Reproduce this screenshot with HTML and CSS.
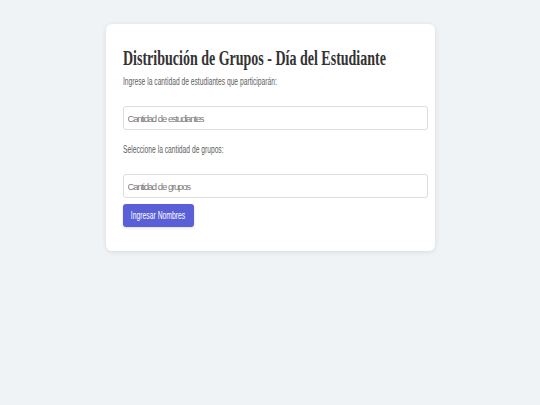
FILE: index.html
```html
<!DOCTYPE html>
<html lang="es">
<head>
<meta charset="utf-8">
<title>Distribución de Grupos</title>
<link rel="stylesheet" href="styles.css">
</head>
<body>
<main class="page">
  <section class="card">
    <h1 class="title"><span class="squeeze">Distribución de Grupos - Día del Estudiante</span></h1>
    <label class="label" for="estudiantes"><span class="squeeze">Ingrese la cantidad de estudiantes que participarán:</span></label>
    <input class="field" id="estudiantes" type="number" placeholder="Cantidad de estudiantes">
    <label class="label label-second" for="grupos"><span class="squeeze">Seleccione la cantidad de grupos:</span></label>
    <input class="field" id="grupos" type="number" placeholder="Cantidad de grupos">
    <button class="btn" type="button"><span class="squeeze squeeze-center">Ingresar Nombres</span></button>
  </section>
</main>
</body>
</html>
```

FILE: styles.css
```css
html, body {
  margin: 0;
  padding: 0;
}

body {
  background: #f0f3f6;
  font-family: "Liberation Sans", Arial, sans-serif;
  width: 540px;
  height: 405px;
}

.page {
  display: flex;
  justify-content: center;
  padding-top: 24px;
}

.card {
  width: 329px;
  box-sizing: border-box;
  background: #ffffff;
  border-radius: 6px;
  box-shadow: 0 1px 5px rgba(0, 0, 0, 0.1);
  padding: 22px 17px 24px 17px;
  display: flex;
  flex-direction: column;
  align-items: flex-start;
}

.title {
  margin: 0 0 5px 0;
  font-family: "Liberation Serif", "Times New Roman", serif;
  font-weight: bold;
  font-size: 20px;
  line-height: 24px;
  color: #333333;
  white-space: nowrap;
}

.squeeze {
  display: inline-block;
  white-space: nowrap;
  transform: scaleX(0.7);
  transform-origin: left center;
}

.squeeze-center {
  margin: 0 -12px;
  transform: scaleX(0.68);
  transform-origin: center center;
}

.label {
  display: block;
  font-size: 10px;
  line-height: 14px;
  color: #606060;
  margin-bottom: 17px;
  white-space: nowrap;
}

.label .squeeze {
  transform: scaleX(0.67);
}

.label-second {
  margin-top: 13px;
}

.field {
  box-sizing: content-box;
  width: 100%;
  height: 22px;
  padding: 0 4px;
  margin: 0;
  border: 1px solid #dddddd;
  border-radius: 3px;
  background: #ffffff;
  font-family: "Liberation Sans", Arial, sans-serif;
  font-size: 9.5px;
  letter-spacing: -1.2px;
  word-spacing: 0.5px;
  color: #333333;
  outline: none;
  -moz-appearance: textfield;
}

.field::-webkit-outer-spin-button,
.field::-webkit-inner-spin-button {
  -webkit-appearance: none;
  margin: 0;
}

.field::placeholder {
  color: #7a7a7a;
}

.btn {
  margin-top: 6px;
  width: 71px;
  height: 23px;
  padding: 0;
  border: none;
  border-radius: 3px;
  background: #5a5fd8;
  color: #ffffff;
  font-family: "Liberation Sans", Arial, sans-serif;
  font-size: 10px;
  line-height: 23px;
  text-align: center;
  box-shadow: 0 1px 3px rgba(0, 0, 0, 0.15);
  cursor: pointer;
  white-space: nowrap;
}
```
